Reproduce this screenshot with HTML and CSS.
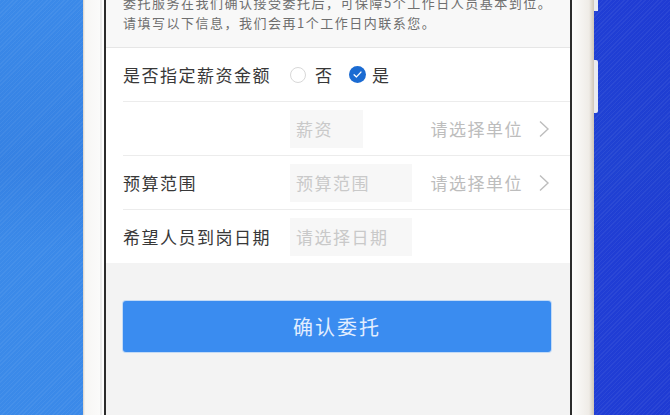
FILE: index.html
```html
<!DOCTYPE html>
<html lang="zh-CN">
<head>
    <meta charset="UTF-8">
    <meta name="viewport" content="width=device-width, initial-scale=1.0">
    <title>委托招聘</title>
    <link rel="stylesheet" href="styles.css">
</head>
<body>
    <div class="phone">
        <div class="screen">
            <p class="intro">委托服务在我们确认接受委托后，可保障5个工作日人员基本到位。<br>请填写以下信息，我们会再1个工作日内联系您。</p>

            <div class="form">
                <div class="row">
                    <span class="label">是否指定薪资金额</span>
                    <label class="radio"><span class="dot"></span>否</label>
                    <label class="radio checked">
                        <span class="dot">
                            <svg viewBox="0 0 16 16" width="11" height="11"><polyline points="3,8.5 6.5,11.5 13,4.5" fill="none" stroke="#fff" stroke-width="2" stroke-linecap="round" stroke-linejoin="round"/></svg>
                        </span>是
                    </label>
                </div>
                <div class="row">
                    <span class="label"></span>
                    <span class="field short">薪资</span>
                    <span class="unit">请选择单位
                        <svg class="chevron" viewBox="0 0 12 18" width="12" height="18"><polyline points="2,1.5 10,9 2,16.5" fill="none" stroke="#bdbdbd" stroke-width="1.4"/></svg>
                    </span>
                </div>
                <div class="row">
                    <span class="label">预算范围</span>
                    <span class="field">预算范围</span>
                    <span class="unit">请选择单位
                        <svg class="chevron" viewBox="0 0 12 18" width="12" height="18"><polyline points="2,1.5 10,9 2,16.5" fill="none" stroke="#bdbdbd" stroke-width="1.4"/></svg>
                    </span>
                </div>
                <div class="row">
                    <span class="label">希望人员到岗日期</span>
                    <span class="field">请选择日期</span>
                </div>
            </div>

            <div class="actions">
                <button class="submit-btn">确认委托</button>
            </div>
        </div>
    </div>
</body>
</html>
```

FILE: styles.css
```css
* {
    margin: 0;
    padding: 0;
    box-sizing: border-box;
}

body {
    font-family: "Noto Sans CJK SC", "Noto Sans", sans-serif;
    height: 100vh;
    overflow: hidden;
    background:
        repeating-linear-gradient(135deg, rgba(255, 255, 255, 0.05) 0 1px, transparent 1px 3px),
        linear-gradient(180deg, rgba(30, 90, 200, 0) 0, rgba(30, 90, 200, 0.18) 40%, rgba(30, 90, 200, 0) 60%),
        linear-gradient(90deg, #3b8ae9 0, #3a87e8 50%, #2548dc 50%, #1f3bd3 100%);
}

.phone {
    position: relative;
    margin-left: 83px;
    width: 511px;
    height: 415px;
    padding: 0 22px 0 21px;
    background: linear-gradient(90deg, #d9d2c7 0, #f7f6f4 2px, #fbfbfa 17px, #dcdcdc 18px, #fdfdfd 19px, #fdfdfd 488px, #efece7 506px, #cfc6b8 511px);
}

/* side button */
.phone::after {
    content: "";
    position: absolute;
    right: -4px;
    top: 60px;
    width: 4px;
    height: 53px;
    background: #e9ebf1;
    border-radius: 0 2px 2px 0;
}

.phone::before {
    content: "";
    position: absolute;
    right: -4px;
    top: 0;
    width: 4px;
    height: 11px;
    background: #e9ebf1;
}

.screen {
    height: 100%;
    border-left: 2px solid #2c2c2c;
    border-right: 2px solid #2c2c2c;
    background: #f3f3f3;
    overflow: hidden;
}

.intro {
    margin-top: -7px;
    padding: 0 0 14px 17px;
    background: #f8f8f8;
    border-bottom: 1px solid #e6e6e6;
    font-size: 13px;
    line-height: 20px;
    letter-spacing: 1.5px;
    color: #6f6f6f;
    white-space: nowrap;
}

.form {
    background: #fff;
    padding-left: 17px;
}

.row {
    display: flex;
    align-items: center;
    height: 54px;
    border-bottom: 1px solid #ececec;
}

.row:last-child {
    height: 53px;
    border-bottom: none;
}

.label {
    width: 167px;
    flex-shrink: 0;
    font-size: 17px;
    letter-spacing: 1.5px;
    color: #383838;
}

.radio {
    display: flex;
    align-items: center;
    font-size: 17px;
    color: #383838;
    margin-right: 17px;
}

.radio .dot {
    width: 16px;
    height: 16px;
    border-radius: 50%;
    border: 1px solid #d8d8d8;
    margin-right: 9px;
    display: flex;
    align-items: center;
    justify-content: center;
}

.radio.checked .dot {
    width: 17px;
    height: 17px;
    border: none;
    background: #1b6bd2;
    margin-right: 6px;
}

.field {
    display: flex;
    align-items: center;
    width: 122px;
    height: 38px;
    padding-left: 6px;
    background: #f7f7f7;
    font-size: 17px;
    letter-spacing: 1.5px;
    color: #c9c9c9;
}

.field.short {
    width: 73px;
}

.unit {
    display: flex;
    align-items: center;
    margin-left: auto;
    margin-right: 20px;
    font-size: 17px;
    letter-spacing: 1.5px;
    color: #bdbdbd;
}

.chevron {
    margin-left: 15px;
}

.actions {
    padding: 38px 19px 0 17px;
}

.submit-btn {
    width: 100%;
    height: 51px;
    border: none;
    border-radius: 3px;
    background: #3a8cf0;
    box-shadow: 0 0 0 1px rgba(120, 180, 250, 0.4);
    font-family: inherit;
    font-size: 20px;
    letter-spacing: 2px;
    color: #e2eeff;
}
```
